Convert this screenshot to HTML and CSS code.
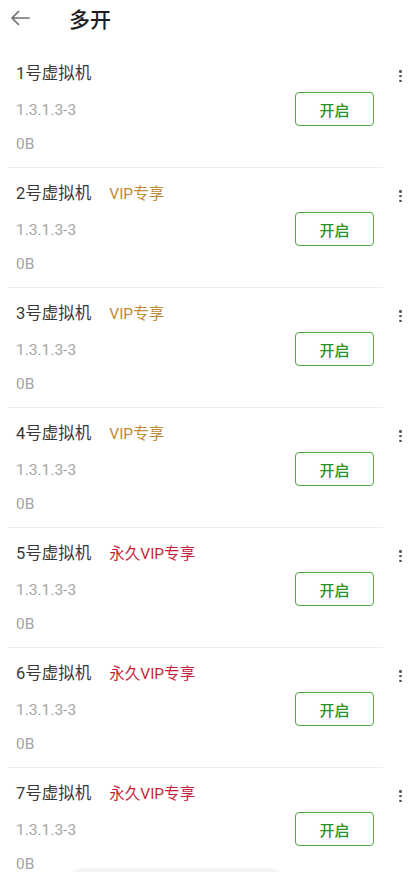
FILE: index.html
```html
<!DOCTYPE html>
<html lang="zh-CN">
<head>
<meta charset="utf-8">
<title>多开</title>
<link rel="stylesheet" href="styles.css">
</head>
<body>
<header class="topbar">
  <svg class="back" width="20" height="16" viewBox="0 0 20 16"><path d="M19 8H2M8.5 1.5L2 8l6.5 6.5" fill="none" stroke="#707070" stroke-width="1.7" stroke-linecap="round" stroke-linejoin="round"/></svg>
  <h1 class="title">多开</h1>
</header>
<main class="list">
  <div class="item"><div class="main"><div class="info"><div class="name">1号虚拟机</div><div class="ver">1.3.1.3-3</div><div class="size">0B</div></div><button class="btn">开启</button></div><div class="more"><i></i><i></i><i></i></div></div>
  <div class="item"><div class="main"><div class="info"><div class="name">2号虚拟机<span class="tag vip">VIP专享</span></div><div class="ver">1.3.1.3-3</div><div class="size">0B</div></div><button class="btn">开启</button></div><div class="more"><i></i><i></i><i></i></div></div>
  <div class="item"><div class="main"><div class="info"><div class="name">3号虚拟机<span class="tag vip">VIP专享</span></div><div class="ver">1.3.1.3-3</div><div class="size">0B</div></div><button class="btn">开启</button></div><div class="more"><i></i><i></i><i></i></div></div>
  <div class="item"><div class="main"><div class="info"><div class="name">4号虚拟机<span class="tag vip">VIP专享</span></div><div class="ver">1.3.1.3-3</div><div class="size">0B</div></div><button class="btn">开启</button></div><div class="more"><i></i><i></i><i></i></div></div>
  <div class="item"><div class="main"><div class="info"><div class="name">5号虚拟机<span class="tag svip">永久VIP专享</span></div><div class="ver">1.3.1.3-3</div><div class="size">0B</div></div><button class="btn">开启</button></div><div class="more"><i></i><i></i><i></i></div></div>
  <div class="item"><div class="main"><div class="info"><div class="name">6号虚拟机<span class="tag svip">永久VIP专享</span></div><div class="ver">1.3.1.3-3</div><div class="size">0B</div></div><button class="btn">开启</button></div><div class="more"><i></i><i></i><i></i></div></div>
  <div class="item"><div class="main"><div class="info"><div class="name">7号虚拟机<span class="tag svip">永久VIP专享</span></div><div class="ver">1.3.1.3-3</div><div class="size">0B</div></div><button class="btn">开启</button></div><div class="more"><i></i><i></i><i></i></div></div>
</main>
<div class="bottom-pill"></div>
</body>
</html>
```
FILE: styles.css
```css
html, body {
  margin: 0;
  padding: 0;
  background: #fff;
  font-family: Roboto, "Noto Sans CJK SC", sans-serif;
  overflow: hidden;
  height: 872px;
}
.topbar {
  height: 36px;
  display: flex;
  align-items: center;
}
.back {
  margin-left: 10px;
}
.title {
  margin: 0 0 0 39px;
  font-family: "Noto Sans CJK SC", sans-serif;
  font-size: 21px;
  font-weight: 500;
  color: #1e1e1e;
  line-height: 36px;
}
.list {
  padding-top: 12px;
}
.item {
  display: flex;
}
.main {
  width: 375px;
  margin-left: 8px;
  box-sizing: border-box;
  padding: 14px 9px 11px 8px;
  border-bottom: 1px solid #ededed;
  display: flex;
  align-items: center;
  justify-content: space-between;
}
.info {
  display: flex;
  flex-direction: column;
}
.name {
  font-size: 16.5px;
  line-height: 24px;
  color: #383838;
}
.tag {
  font-size: 15.5px;
  margin-left: 18px;
}
.vip { color: #c08a34; }
.svip { color: #c91f3d; }
.ver {
  margin-top: 12px;
  font-size: 15.5px;
  line-height: 24px;
  color: #a5a5a5;
}
.size {
  margin-top: 10px;
  font-size: 15.5px;
  line-height: 24px;
  color: #a5a5a5;
}
.btn {
  width: 79px;
  height: 34px;
  box-sizing: border-box;
  border: 1.5px solid #4aa83e;
  border-radius: 4px;
  background: #fff;
  color: #2a9423;
  font-family: "Noto Sans CJK SC", sans-serif;
  font-size: 15px;
  font-weight: 500;
  padding: 0;
}
.more {
  flex: 1;
  display: flex;
  flex-direction: column;
  align-items: flex-end;
  padding: 22px 7px 0 0;
  gap: 2.2px;
}
.more i {
  display: block;
  width: 2.6px;
  height: 2.6px;
  border-radius: 50%;
  background: #555;
}
.bottom-pill {
  position: fixed;
  left: 70px;
  bottom: -20px;
  width: 212px;
  height: 24px;
  border-radius: 12px;
  background: #f3f3f3;
}
```
